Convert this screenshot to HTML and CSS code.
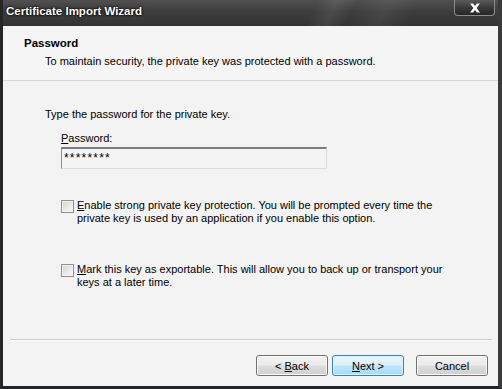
FILE: index.html
```html
<!DOCTYPE html>
<html>
<head>
    <meta charset="UTF-8" />
    <title>Certificate Import Wizard</title>
    <link rel="stylesheet" href="styles.css">
</head>
<body>
    <div class="window">
        <div class="titlebar">
            <span class="title">Certificate Import Wizard</span>
            <div class="close">
                <svg width="14" height="10" viewBox="0 0 14 10">
                    <path d="M2 0.5 L5 0.5 L7 3 L9 0.5 L12 0.5 L8.6 5 L12 9.5 L9 9.5 L7 7 L5 9.5 L2 9.5 L5.4 5 Z" fill="#ffffff" />
                </svg>
            </div>
        </div>
        <div class="client">
            <div class="header">
                <h1>Password</h1>
                <p>To maintain security, the private key was protected with a password.</p>
            </div>
            <div class="content">
                <p class="intro">Type the password for the private key.</p>
                <div class="field">
                    <label><u>P</u>assword:</label>
                    <div class="textbox">********</div>
                </div>
                <div class="option first">
                    <span class="checkbox"></span>
                    <span class="option-text"><u>E</u>nable strong private key protection. You will be prompted every time the<br>private key is used by an application if you enable this option.</span>
                </div>
                <div class="option second">
                    <span class="checkbox"></span>
                    <span class="option-text"><u>M</u>ark this key as exportable. This will allow you to back up or transport your<br>keys at a later time.</span>
                </div>
            </div>
            <div class="footer">
                <div class="separator"></div>
                <div class="buttons">
                    <button class="btn">&lt; <u>B</u>ack</button>
                    <button class="btn default"><u>N</u>ext &gt;</button>
                    <button class="btn cancel">Cancel</button>
                </div>
            </div>
        </div>
    </div>
</body>
</html>
```

FILE: styles.css
```css
html, body {
    margin: 0;
    padding: 0;
}

body {
    width: 502px;
    height: 389px;
    overflow: hidden;
    font-family: "Liberation Sans", Arial, sans-serif;
    font-size: 11px;
    color: #000000;
}

.window {
    width: 502px;
    height: 389px;
    box-sizing: border-box;
    display: flex;
    flex-direction: column;
    background-color: #2f2f2f;
    border-left: 3px solid #262626;
    border-right: 4px solid #3a3a3a;
    border-bottom: 3px solid #1f2426;
}

.titlebar {
    position: relative;
    height: 26px;
    flex: none;
    background:
        linear-gradient(115deg, transparent 62%, rgba(255,255,255,0.08) 66%, transparent 70%, rgba(255,255,255,0.06) 76%, transparent 82%),
        linear-gradient(180deg, #505050 0%, #3d3d3d 45%, #333333 100%);
}

.title {
    position: absolute;
    left: 3px;
    top: 5px;
    font-weight: bold;
    font-size: 11.5px;
    color: #ffffff;
    text-shadow: 0 0 3px #000000, 0 0 2px #000000;
}

.close {
    position: absolute;
    left: 451px;
    top: 0;
    width: 41px;
    height: 16px;
    box-sizing: border-box;
    border: 1px solid #8c8c8c;
    border-top: none;
    border-radius: 0 0 4px 4px;
    background: linear-gradient(180deg, #5a5a5a 0%, #3a3a3a 50%, #262626 100%);
    display: flex;
    align-items: center;
    justify-content: center;
}

.client {
    flex: 1;
    display: flex;
    flex-direction: column;
    background-color: #f3f3f3;
}

.header {
    height: 55px;
    box-sizing: border-box;
    padding: 10px 0 0 21px;
    background-color: #f5f5f5;
    border-bottom: 1px solid #d6d6d6;
}

.header h1 {
    margin: 0;
    font-size: 11.5px;
    font-weight: bold;
    line-height: 14px;
}

.header p {
    margin: 4px 0 0 21px;
    line-height: 14px;
}

.content {
    flex: 1;
    padding-left: 42px;
}

.intro {
    margin: 26px 0 0 0;
    line-height: 14px;
}

.field {
    margin: 10px 0 0 16px;
    display: flex;
    flex-direction: column;
    gap: 2px;
}

.field label {
    line-height: 14px;
}

.textbox {
    width: 266px;
    height: 22px;
    box-sizing: border-box;
    border: 1px solid #dcdcdc;
    border-top: 2px solid #7e7e7e;
    border-left: 1px solid #8e8e8e;
    background-color: #f4f4f4;
    padding: 2px 0 0 2px;
    line-height: 14px;
    font-size: 12px;
    letter-spacing: 1.2px;
}

.option {
    margin-left: 16px;
    display: flex;
    gap: 3px;
    align-items: flex-start;
}

.option.first {
    margin-top: 30px;
}

.option.second {
    margin-top: 38px;
}

.checkbox {
    width: 13px;
    height: 13px;
    margin-top: 1px;
    box-sizing: border-box;
    border: 1px solid #8f8f8f;
    background: linear-gradient(135deg, #d4d4d4 0%, #ececec 60%, #f8f8f8 100%);
    box-shadow: inset 0 0 0 1px #f4f4f4;
    flex: none;
}

.option-text {
    line-height: 13px;
}

.footer {
    height: 47px;
    padding: 0 10px 0 7px;
}

.separator {
    height: 1px;
    margin-right: -4px;
    background-color: #cbcbcb;
    border-bottom: 1px solid #fbfbfb;
}

.buttons {
    margin-top: 14px;
    display: flex;
    justify-content: flex-end;
    gap: 4px;
}

.btn {
    width: 72px;
    height: 21px;
    padding: 0;
    font-family: "Liberation Sans", Arial, sans-serif;
    font-size: 11px;
    color: #000000;
    border: 1px solid #707070;
    border-radius: 3px;
    background: linear-gradient(180deg, #f2f2f2 0%, #ebebeb 48%, #dddddd 52%, #cfcfcf 100%);
    box-shadow: inset 0 0 0 1px #fbfbfb;
}

.btn.default {
    border-color: #3c7fb1;
    background: linear-gradient(180deg, #eaf6fd 0%, #d9f0fc 48%, #bee6fd 52%, #a7d9f5 100%);
    box-shadow: inset 0 0 0 1px #dff2fc;
}

.btn.cancel {
    margin-left: 8px;
}
```
